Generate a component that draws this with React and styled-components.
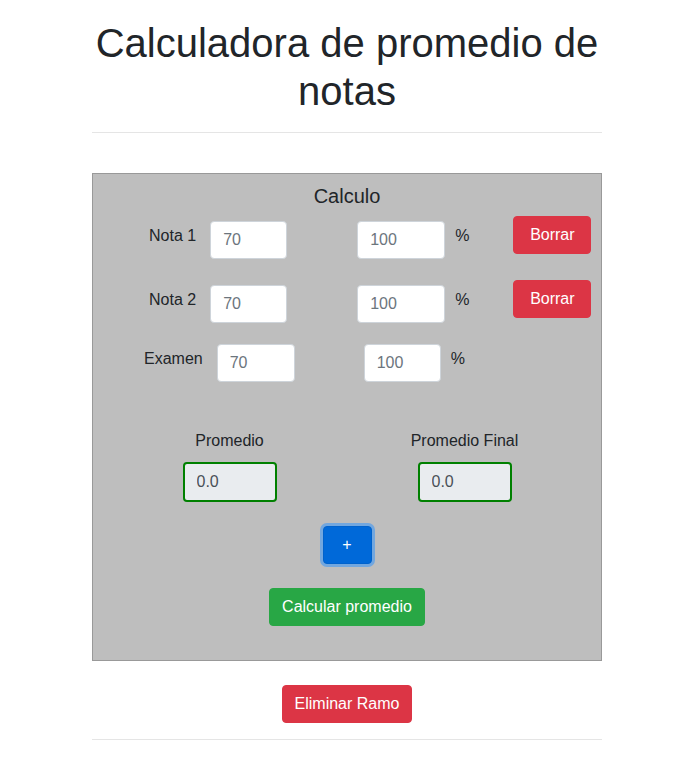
import React from 'react'
import styled, { createGlobalStyle } from "styled-components"

const Global = createGlobalStyle`
    html, body {
        margin: 0;
        padding: 0;
        background: #fff;
    }
    body {
        font-family: "Liberation Sans", Arial, Helvetica, sans-serif;
        font-size: 16px;
        line-height: 1.5;
        color: #212529;
    }
`;

const filas = [
    { label: 'Nota 1', lm: 56, im: 14, w1: 77, gm: 70, w2: 88, pm: 10, top: 5, lt: 8, borrar: true },
    { label: 'Nota 2', lm: 56, im: 14, w1: 77, gm: 70, w2: 88, pm: 10, top: 5, lt: 8, borrar: true },
    { label: 'Examen', lm: 51, im: 14, w1: 78, gm: 69, w2: 77, pm: 10, top: 0, lt: 3, borrar: false },
];

const App = () =>
(
    <Page>
        <Global />
        <Container>
            <Title>Calculadora de promedio de notas</Title>
            <Hr top={17} />
            <Box>
                <BoxTitle>Calculo</BoxTitle>
                {filas.map((f, i) => (
                    <Row key={i} first={i === 0}>
                        <Label ml={f.lm} mt={f.lt}>{f.label}</Label>
                        <Input ml={f.im} mt={f.top} w={f.w1} placeholder="70" />
                        <Input ml={f.gm} mt={f.top} w={f.w2} placeholder="100" />
                        <Percent ml={f.pm} mt={f.lt}>%</Percent>
                        {f.borrar && <Button color="#dc3545" w={78} ml={44}>Borrar</Button>}
                    </Row>
                ))}
                <Results>
                    <ResultCol>
                        <ResultLabel>Promedio</ResultLabel>
                        <ResultInput readOnly value="0.0" />
                    </ResultCol>
                    <ResultCol>
                        <ResultLabel>Promedio Final</ResultLabel>
                        <ResultInput readOnly value="0.0" />
                    </ResultCol>
                </Results>
                <Center mt={24}>
                    <PlusButton>+</PlusButton>
                </Center>
                <Center mt={24}>
                    <Button color="#28a745">Calcular promedio</Button>
                </Center>
            </Box>
            <Center mt={24}>
                <Button color="#dc3545">Eliminar Ramo</Button>
            </Center>
            <Hr top={16} />
        </Container>
    </Page>
);

export default App;

const Page = styled.div`
    padding-left: 10px;
    padding-top: 19px;
    padding-bottom: 40px;`;

const Container = styled.div`
    width: 510px;
    margin: 0 auto;`;

const Title = styled.h1`
    margin: 0;
    font-size: 40px;
    font-weight: 500;
    line-height: 48px;
    text-align: center;
    color: #212529;`;

const Hr = styled.hr`
    margin: ${p => p.top}px 0 0;
    border: 0;
    border-top: 1px solid rgba(0, 0, 0, 0.1);`;

const Box = styled.div`
    margin-top: 40px;
    background: #bebebe;
    border: 1px solid #999;
    padding: 10px 0 34px;`;

const BoxTitle = styled.h5`
    margin: 0;
    font-size: 20px;
    font-weight: 500;
    line-height: 24px;
    text-align: center;`;

const Row = styled.div`
    display: flex;
    align-items: flex-start;
    margin-top: ${p => p.first ? 8 : 26}px;
    height: 38px;`;

const Label = styled.span`
    margin-left: ${p => p.ml}px;
    margin-top: ${p => p.mt}px;
    line-height: 24px;
    white-space: nowrap;`;

const Percent = styled(Label)``;

const Input = styled.input`
    box-sizing: border-box;
    margin-left: ${p => p.ml}px;
    margin-top: ${p => p.mt}px;
    width: ${p => p.w}px;
    height: 38px;
    padding: 6px 12px;
    font-family: inherit;
    font-size: 16px;
    color: #495057;
    background: #fff;
    border: 1px solid #ced4da;
    border-radius: 4px;
    outline: none;
    &::placeholder {
        color: #6c757d;
    }`;

const Button = styled.button`
    box-sizing: border-box;
    margin-left: ${p => p.ml || 0}px;
    ${p => p.w ? `width: ${p.w}px;` : ''}
    height: 38px;
    padding: 6px 12px;
    font-family: inherit;
    font-size: 16px;
    line-height: 24px;
    color: #fff;
    background: ${p => p.color};
    border: 1px solid ${p => p.color};
    border-radius: 4px;
    white-space: nowrap;`;

const PlusButton = styled.button`
    box-sizing: border-box;
    width: 49px;
    height: 38px;
    padding: 0;
    font-family: inherit;
    font-size: 16px;
    line-height: 24px;
    color: #fff;
    background: #0069d9;
    border: 1px solid #0062cc;
    border-radius: 4px;
    box-shadow: 0 0 0 3px rgba(38, 143, 255, 0.5);`;

const Results = styled.div`
    display: flex;
    justify-content: center;
    margin-top: 47px;`;

const ResultCol = styled.div`
    width: 235px;
    display: flex;
    flex-direction: column;
    align-items: center;`;

const ResultLabel = styled.span`
    line-height: 24px;`;

const ResultInput = styled.input`
    box-sizing: border-box;
    margin-top: 9px;
    width: 94px;
    height: 40px;
    padding: 6px 12px;
    font-family: inherit;
    font-size: 16px;
    color: #495057;
    background: #e9ecef;
    border: 2px solid #008000;
    border-radius: 4px;
    outline: none;`;

const Center = styled.div`
    display: flex;
    justify-content: center;
    margin-top: ${p => p.mt}px;`;
